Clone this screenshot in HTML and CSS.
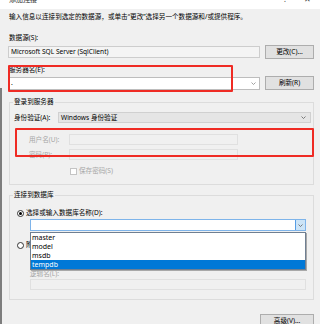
FILE: index.html
```html
<!DOCTYPE html>
<html lang="zh-CN">
<head>
<meta charset="utf-8">
<title>添加连接</title>
<link rel="stylesheet" href="styles.css">
</head>
<body>
<div class="window">
  <div class="titlebar">
    <span class="title">添加连接</span>
    <span class="controls"><span class="ctl">?</span><span class="ctl">✕</span></span>
  </div>
  <div class="main">
    <p class="intro">输入信息以连接到选定的数据源，或单击“更改”选择另一个数据源和/或提供程序。</p>
    <div class="label l-ds">数据源(S):</div>
    <div class="row r-ds">
      <div class="box readonly">Microsoft SQL Server (SqlClient)</div>
      <button class="btn">更改(C)...</button>
    </div>
    <div class="label l-srv">服务器名(E):</div>
    <div class="row r-srv">
      <div class="box combo"><span class="val">.</span><svg class="chev" width="5" height="3" viewBox="0 0 5 3"><polyline points="0.5,0.5 2.5,2.5 4.5,0.5" fill="none" stroke="#8a8a8a" stroke-width="0.8"/></svg></div>
      <button class="btn">刷新(R)</button>
    </div>

    <div class="group g-login">
      <div class="gtitle">登录到服务器</div>
      <div class="frow r-auth">
        <span class="flabel w-auth">身份验证(A):</span>
        <div class="box dropbtn"><span class="val">Windows 身份验证</span><svg class="chev" width="5" height="3" viewBox="0 0 5 3"><polyline points="0.5,0.5 2.5,2.5 4.5,0.5" fill="none" stroke="#606060" stroke-width="0.8"/></svg></div>
      </div>
      <div class="frow r-user">
        <span class="flabel dis w-user">用户名(U):</span>
        <div class="box disabled w-field"></div>
      </div>
      <div class="frow r-pw">
        <span class="flabel dis w-user">密码(P):</span>
        <div class="box disabled w-field"></div>
      </div>
      <div class="frow r-check">
        <span class="checkbox"></span>
        <span class="dis">保存密码(S)</span>
      </div>
    </div>

    <div class="group g-db">
      <div class="gtitle">连接到数据库</div>
      <div class="frow r-radio1">
        <span class="radio on"></span>
        <span>选择或输入数据库名称(D):</span>
      </div>
      <div class="box focus db-combo"><span class="arrowbtn"><svg width="5" height="3" viewBox="0 0 5 3"><polyline points="0.5,0.5 2.5,2.5 4.5,0.5" fill="none" stroke="#606060" stroke-width="0.8"/></svg></span></div>
      <div class="frow r-radio2">
        <span class="radio"></span>
        <span>附加数据库文件(H):</span>
      </div>
      <div class="frow r-file">
        <div class="box file"></div>
        <button class="btn small">浏览(B)...</button>
      </div>
      <div class="label l-logic dis">逻辑名(L):</div>
      <div class="box disabled logic"></div>
    </div>

    <div class="bottom">
      <button class="btn adv">高级(V)...</button>
    </div>
  </div>

  <div class="mark mark1"></div>
  <div class="mark mark2"></div>

  <ul class="dropdown">
    <li>master</li>
    <li>model</li>
    <li>msdb</li>
    <li class="sel">tempdb</li>
  </ul>
</div>
</body>
</html>
```

FILE: styles.css
```css
* {
  box-sizing: border-box;
  margin: 0;
  padding: 0;
}

html, body {
  width: 320px;
  height: 324px;
  overflow: hidden;
  background: #f0f0f0;
}

body {
  font-family: "Noto Sans", "Noto Sans CJK SC", sans-serif;
  font-size: 6.6px;
  line-height: 8px;
  color: #000;
}

.window {
  position: relative;
  width: 320px;
  height: 324px;
  background: #f0f0f0;
  overflow: hidden;
}

.window::before {
  content: "";
  position: absolute;
  left: 0;
  top: 88px;
  bottom: 0;
  width: 2px;
  background: #7d7d7d;
}

.titlebar {
  height: 9px;
  background: #fff;
  display: flex;
  justify-content: space-between;
  overflow: hidden;
  padding: 0 9px 0 9px;
}

.title {
  margin-top: -5px;
  font-size: 7px;
  line-height: 10px;
  color: #333;
}

.controls {
  display: flex;
  gap: 17px;
  margin-top: -6px;
  font-size: 8px;
  line-height: 10px;
  color: #444;
}

.main {
  padding: 4px 6px 0 8px;
}

.intro {
  height: 8px;
  white-space: nowrap;
  padding-left: 1px;
}

.label {
  height: 8px;
  padding-left: 1px;
  white-space: nowrap;
}

.l-ds { margin-top: 13px; }
.l-srv { margin-top: 7px; }

.row {
  display: flex;
  align-items: center;
  gap: 5px;
  height: 14px;
}

.r-ds { margin-top: 3px; }
.r-srv { margin-top: 2px; }

.box {
  display: flex;
  align-items: center;
  height: 12px;
  border: 1px solid #c4c4c4;
  background: #fff;
  padding-left: 2px;
  white-space: nowrap;
}

.row .box { flex: 1; }

.readonly {
  background: #f4f4f4;
  border-color: #cdcdcd;
}

.combo {
  height: 13px;
  border-color: #bdbdbd;
  justify-content: space-between;
  padding-right: 3px;
}

.btn {
  width: 49px;
  height: 14px;
  background: #e1e1e1;
  border: 1px solid #adadad;
  font: inherit;
  color: #000;
  white-space: nowrap;
}

.group {
  border: 1px solid #dcdcdc;
  margin-left: 1px;
  padding: 0 2px 9px 4px;
}

.g-login { margin-top: 12px; }
.g-db { margin-top: 10px; }

.gtitle {
  margin-top: -5px;
  margin-left: -1px;
  width: fit-content;
  height: 8px;
  padding: 0 1px;
  background: #f0f0f0;
}

.frow {
  display: flex;
  align-items: center;
  white-space: nowrap;
}

.flabel { flex: none; }

.dis { color: #a6a6a6; }

.r-auth { margin-top: 6px; height: 11px; }
.w-auth { width: 44px; }

.dropbtn {
  flex: 1;
  height: 11px;
  background: #e5e5e5;
  border-color: #d0d0d0;
  justify-content: space-between;
  padding-right: 4px;
}

.r-user { margin-top: 11px; height: 11px; padding-left: 15px; }
.r-pw { margin-top: 4px; height: 11px; padding-left: 15px; }
.w-user { width: 40px; }

.w-field { width: 169px; height: 11px; }

.disabled {
  background: #f0f0f0;
  border-color: #e0e0e0;
}

.r-check {
  margin-top: 7px;
  height: 8px;
  padding-left: 56px;
  gap: 2px;
}

.checkbox {
  width: 7px;
  height: 7px;
  background: #fff;
  border: 1px solid #c4c4c4;
}

.r-radio1 { margin-top: 10px; height: 8px; gap: 2px; }
.r-radio2 { margin-top: 10px; height: 8px; gap: 2px; }

.radio {
  position: relative;
  width: 7px;
  height: 7px;
  margin-left: 3px;
  border: 1px solid #333;
  border-radius: 50%;
  background: #fff;
}

.radio.on::after {
  content: "";
  position: absolute;
  left: 1px;
  top: 1px;
  width: 3px;
  height: 3px;
  border-radius: 50%;
  background: #000;
}

.db-combo {
  margin: 2px 5px 0 16px;
  height: 12px;
  padding: 0;
  justify-content: flex-end;
}

.focus {
  border-color: #7eb4ea;
}

.arrowbtn {
  width: 10px;
  height: 10px;
  background: #cce4f7;
  border-left: 1px solid #569de5;
  display: flex;
  align-items: center;
  justify-content: center;
}

.r-file {
  margin: 2px 5px 0 16px;
  height: 11px;
  gap: 5px;
}

.file { flex: 1; height: 11px; }

.btn.small { height: 11px; width: 45px; }

.l-logic { margin: 8px 0 0 16px; padding-left: 0; }

.logic {
  margin: 1px 5px 0 16px;
  height: 11px;
}

.g-db { padding-bottom: 9px; }

.bottom {
  display: flex;
  justify-content: flex-end;
  margin-top: 14px;
}

.btn.adv { width: 54px; }

.mark {
  position: absolute;
  border: 2px solid #ef2b24;
  border-radius: 1px;
}

.mark1 {
  left: 8px;
  top: 65px;
  width: 225px;
  height: 27px;
}

.mark2 {
  left: 15px;
  top: 128px;
  width: 299px;
  height: 29px;
}

.dropdown {
  position: absolute;
  left: 30px;
  top: 232px;
  width: 276px;
  height: 38px;
  list-style: none;
  background: #fff;
  border: 1px solid #6f7f92;
  box-shadow: 1px 1px 0 #a8a8a8;
}

.dropdown li {
  height: 9px;
  line-height: 9px;
  font-size: 7px;
  padding-left: 1px;
}

.dropdown li.sel {
  background: #0078d7;
  color: #fff;
}
```
